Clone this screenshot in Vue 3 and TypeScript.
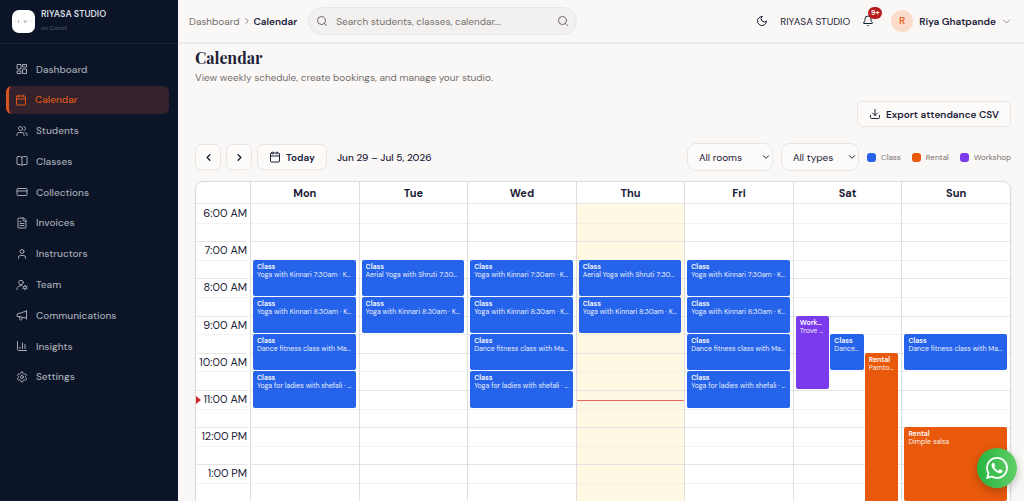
<script setup lang="ts">
import { ref } from 'vue'

interface Shape {
  d?: string
  circles?: [number, number, number][]
}

interface NavItem {
  label: string
  icon: Shape
}

type Kind = 'class' | 'rental' | 'workshop'

interface Booking {
  kind: Kind
  label: string
  detail: string
  start: number
  end: number
  lane?: number
}

interface Day {
  name: string
  today?: boolean
  bookings: Booking[]
}

const calendarIcon: Shape = { d: 'M8 2v4M16 2v4M3 10h18M5 4h14a2 2 0 0 1 2 2v14a2 2 0 0 1-2 2H5a2 2 0 0 1-2-2V6a2 2 0 0 1 2-2z' }

const navItems: NavItem[] = [
  { label: 'Dashboard', icon: { d: 'M3 3h7v9H3zM14 3h7v5h-7zM14 12h7v9h-7zM3 16h7v5H3z' } },
  { label: 'Calendar', icon: calendarIcon },
  { label: 'Students', icon: { d: 'M16 21v-2a4 4 0 0 0-4-4H6a4 4 0 0 0-4 4v2M22 21v-2a4 4 0 0 0-3-3.87M16 3.13a4 4 0 0 1 0 7.75', circles: [[9, 7, 4]] } },
  { label: 'Classes', icon: { d: 'M12 5v16M3 19a1 1 0 0 1-1-1V4a1 1 0 0 1 1-1h6a3 3 0 0 1 3 3 3 3 0 0 1 3-3h6a1 1 0 0 1 1 1v14a1 1 0 0 1-1 1h-6a3 3 0 0 0-3 2 3 3 0 0 0-3-2z' } },
  { label: 'Collections', icon: { d: 'M4 5h16a2 2 0 0 1 2 2v10a2 2 0 0 1-2 2H4a2 2 0 0 1-2-2V7a2 2 0 0 1 2-2zM2 10h20' } },
  { label: 'Invoices', icon: { d: 'M15 2H6a2 2 0 0 0-2 2v16a2 2 0 0 0 2 2h12a2 2 0 0 0 2-2V7zM14 2v4a2 2 0 0 0 2 2h4M10 9H8M16 13H8M16 17H8' } },
  { label: 'Instructors', icon: { d: 'M19 21v-2a4 4 0 0 0-4-4H9a4 4 0 0 0-4 4v2', circles: [[12, 7, 4]] } },
  { label: 'Team', icon: { d: 'M2 21v-1a7 7 0 0 1 9-6.500M18 12.500v1.500M18 20v1.500M13.800 14.800l1.300.7M20.900 18.500l1.300.7M13.800 19.200l1.300-.7M20.900 15.500l1.300-.7', circles: [[10, 7, 4.5], [18, 17, 3]] } },
  { label: 'Communications', icon: { d: 'M3 10l18-6v14L3 15zM7 15v4a2 2 0 0 0 5 1v-3M21 3v17' } },
  { label: 'Insights', icon: { d: 'M3 3v16a2 2 0 0 0 2 2h16M8 17v-3M13 17V6M18 17V9' } },
  { label: 'Settings', icon: { d: 'M12.220 2h-.44a2 2 0 0 0-2 2v.18a2 2 0 0 1-1 1.730l-.43.25a2 2 0 0 1-2 0l-.15-.08a2 2 0 0 0-2.730.73l-.22.38a2 2 0 0 0 .73 2.730l.15.1a2 2 0 0 1 1 1.720v.51a2 2 0 0 1-1 1.740l-.15.09a2 2 0 0 0-.73 2.730l.22.38a2 2 0 0 0 2.730.73l.15-.08a2 2 0 0 1 2 0l.43.25a2 2 0 0 1 1 1.730V20a2 2 0 0 0 2 2h.44a2 2 0 0 0 2-2v-.18a2 2 0 0 1 1-1.730l.43-.25a2 2 0 0 1 2 0l.15.08a2 2 0 0 0 2.730-.73l.22-.39a2 2 0 0 0-.73-2.730l-.15-.08a2 2 0 0 1-1-1.740v-.5a2 2 0 0 1 1-1.740l.15-.09a2 2 0 0 0 .73-2.730l-.22-.38a2 2 0 0 0-2.730-.73l-.15.08a2 2 0 0 1-2 0l-.43-.25a2 2 0 0 1-1-1.730V4a2 2 0 0 0-2-2z', circles: [[12, 12, 3]] } },
]

const activeItem = ref('Calendar')
const query = ref('')
const room = ref('All rooms')
const kindFilter = ref('All types')

const firstHour = 6
const hourCount = 16
const slots = Array.from({ length: hourCount * 2 }, (_, i) => i)
const now = 11.27

const slotLabel = (slot: number) => {
  if (slot % 2) return ''
  const hour = firstHour + slot / 2
  return `${hour > 12 ? hour - 12 : hour}:00 ${hour < 12 ? 'AM' : 'PM'}`
}

const kinnari730: Booking = { kind: 'class', label: 'Class', detail: 'Yoga with Kinnari 7:30am · Kinnari', start: 7.5, end: 8.5 }
const kinnari830: Booking = { kind: 'class', label: 'Class', detail: 'Yoga with Kinnari 8:30am · Kinnari', start: 8.5, end: 9.5 }
const shruti: Booking = { kind: 'class', label: 'Class', detail: 'Aerial Yoga with Shruti 7:30am · Shruti', start: 7.5, end: 8.5 }
const dance: Booking = { kind: 'class', label: 'Class', detail: 'Dance fitness class with Manali', start: 9.5, end: 10.5 }
const ladies: Booking = { kind: 'class', label: 'Class', detail: 'Yoga for ladies with shefali · Shefali', start: 10.5, end: 11.5 }

const days: Day[] = [
  { name: 'Mon', bookings: [kinnari730, kinnari830, dance, ladies] },
  { name: 'Tue', bookings: [shruti, kinnari830] },
  { name: 'Wed', bookings: [kinnari730, kinnari830, dance, ladies] },
  { name: 'Thu', today: true, bookings: [shruti, kinnari830] },
  { name: 'Fri', bookings: [kinnari730, kinnari830, dance, ladies] },
  {
    name: 'Sat',
    bookings: [
      { kind: 'workshop', label: 'Workshop', detail: 'Trove workshop', start: 9, end: 11, lane: 1 },
      { ...dance, lane: 2 },
      { kind: 'rental', label: 'Rental', detail: 'Pamtomime', start: 10, end: 18, lane: 3 },
    ],
  },
  {
    name: 'Sun',
    bookings: [dance, { kind: 'rental', label: 'Rental', detail: 'Dimple salsa', start: 12, end: 14 }],
  },
]

const line = (hour: number) => (hour - firstHour) * 2 + 1

const placement = (b: Booking) => ({
  gridRow: `${line(b.start)} / ${line(b.end)}`,
  gridColumn: b.lane ? `${b.lane + 1}` : '2 / 5',
})

const nowOffset = { top: `${((now - firstHour) / hourCount) * 100}%` }
</script>

<template>
  <div class="app">
    <aside class="sidebar">
      <div class="brand">
        <div class="brand-logo">· ı · v · ·</div>
        <div class="brand-text">
          <strong>RIYASA STUDIO</strong>
          <small>on Contit</small>
        </div>
      </div>
      <nav class="nav">
        <a
          v-for="item in navItems"
          :key="item.label"
          href="#"
          class="nav-item"
          :class="{ active: item.label === activeItem }"
          @click.prevent="activeItem = item.label"
        >
          <svg class="icon nav-icon" viewBox="0 0 24 24">
            <path :d="item.icon.d" />
            <circle v-for="(c, i) in item.icon.circles" :key="i" :cx="c[0]" :cy="c[1]" :r="c[2]" />
          </svg>
          <span>{{ item.label }}</span>
        </a>
      </nav>
    </aside>

    <div class="main">
      <header class="topbar">
        <nav class="crumbs">
          <a href="#">Dashboard</a>
          <svg class="icon crumb-icon" viewBox="0 0 24 24"><path d="M9 18l6-6-6-6" /></svg>
          <span class="crumb-current">Calendar</span>
        </nav>
        <div class="search">
          <svg class="icon" viewBox="0 0 24 24"><circle cx="11" cy="11" r="8" /><path d="M21 21l-4.300-4.300" /></svg>
          <input v-model="query" type="text" aria-label="Search" placeholder="Search students, classes, calendar..." />
          <button type="button" class="plain" aria-label="Run search">
            <svg class="icon" viewBox="0 0 24 24"><circle cx="11" cy="11" r="8" /><path d="M21 21l-4.300-4.300" /></svg>
          </button>
        </div>
        <div class="account">
          <button type="button" class="plain" aria-label="Dark mode">
            <svg class="icon" viewBox="0 0 24 24"><path d="M12 3a6 6 0 0 0 9 9 9 9 0 1 1-9-9z" /></svg>
          </button>
          <span class="studio">RIYASA STUDIO</span>
          <button type="button" class="plain bell" aria-label="Notifications">
            <svg class="icon" viewBox="0 0 24 24"><path d="M10.270 21a2 2 0 0 0 3.460 0M3.260 15.330A1 1 0 0 0 4 17h16a1 1 0 0 0 .74-1.670C19.410 13.960 18 12.500 18 8A6 6 0 0 0 6 8c0 4.500-1.410 5.960-2.740 7.330z" /></svg>
            <span class="badge">9+</span>
          </button>
          <button type="button" class="plain profile">
            <span class="avatar">R</span>
            <span class="profile-name">Riya Ghatpande</span>
            <svg class="icon chevron" viewBox="0 0 24 24"><path d="M4 8l8 8 8-8" /></svg>
          </button>
        </div>
      </header>

      <main class="content">
        <h1>Calendar</h1>
        <p class="subtitle">View weekly schedule, create bookings, and manage your studio.</p>

        <div class="actions">
          <button type="button" class="btn export">
            <svg class="icon" viewBox="0 0 24 24"><path d="M12 3v12M7 10l5 5 5-5M21 15v4a2 2 0 0 1-2 2H5a2 2 0 0 1-2-2v-4" /></svg>
            Export attendance CSV
          </button>
        </div>

        <div class="toolbar">
          <div class="range">
            <button type="button" class="btn step" aria-label="Previous week">
              <svg class="icon" viewBox="0 0 24 24"><path d="M15 18l-6-6 6-6" /></svg>
            </button>
            <button type="button" class="btn step" aria-label="Next week">
              <svg class="icon" viewBox="0 0 24 24"><path d="M9 18l6-6-6-6" /></svg>
            </button>
            <button type="button" class="btn today-btn">
              <svg class="icon" viewBox="0 0 24 24"><path :d="calendarIcon.d" /></svg>
              Today
            </button>
            <span class="range-text">Jun 29 – Jul 5, 2026</span>
          </div>
          <div class="filters">
            <div class="picker rooms">
              <select v-model="room" aria-label="Room"><option>All rooms</option></select>
              <svg class="icon" viewBox="0 0 24 24"><path d="M4 8l8 8 8-8" /></svg>
            </div>
            <div class="picker types">
              <select v-model="kindFilter" aria-label="Type"><option>All types</option></select>
              <svg class="icon" viewBox="0 0 24 24"><path d="M4 8l8 8 8-8" /></svg>
            </div>
            <ul class="legend">
              <li><i class="class"></i>Class</li>
              <li><i class="rental"></i>Rental</li>
              <li><i class="workshop"></i>Workshop</li>
            </ul>
          </div>
        </div>

        <div class="board">
          <table>
            <thead>
              <tr>
                <th class="axis-head"></th>
                <th v-for="day in days" :key="day.name">{{ day.name }}</th>
              </tr>
            </thead>
            <tbody>
              <tr>
                <td>
                  <div class="axis">
                    <div v-for="s in slots" :key="s" class="slot">{{ slotLabel(s) }}</div>
                    <span class="now-arrow" :style="nowOffset"></span>
                  </div>
                </td>
                <td v-for="day in days" :key="day.name" :class="{ today: day.today }">
                  <div class="day">
                    <div v-for="s in slots" :key="s" class="slot" :style="{ gridRow: s + 1 }"></div>
                    <div v-for="b in day.bookings" :key="b.label + b.start" class="booking" :class="b.kind" :style="placement(b)">
                      <b>{{ b.label }}</b>
                      <span>{{ b.detail }}</span>
                    </div>
                    <span v-if="day.today" class="now-line" :style="nowOffset"></span>
                  </div>
                </td>
              </tr>
            </tbody>
          </table>
        </div>
      </main>
    </div>

    <button type="button" class="whatsapp" aria-label="Chat on WhatsApp">
      <svg viewBox="0 0 24 24"><path d="M17.472 14.382c-.297-.149-1.758-.867-2.030-.967-.273-.099-.471-.148-.67.150-.197.297-.767.966-.94 1.164-.173.199-.347.223-.644.075-.297-.15-1.255-.463-2.390-1.475-.883-.788-1.480-1.761-1.653-2.059-.173-.297-.018-.458.130-.606.134-.133.298-.347.446-.520.149-.174.198-.298.298-.497.099-.198.050-.371-.025-.520-.075-.149-.669-1.612-.916-2.207-.242-.579-.487-.500-.669-.510-.173-.008-.371-.010-.570-.010-.198 0-.520.074-.792.372-.272.297-1.040 1.016-1.040 2.479 0 1.462 1.065 2.875 1.213 3.074.149.198 2.096 3.200 5.077 4.487.709.306 1.262.489 1.694.625.712.227 1.360.195 1.871.118.571-.085 1.758-.719 2.006-1.413.248-.694.248-1.289.173-1.413-.074-.124-.272-.198-.570-.347m-5.421 7.403h-.004a9.870 9.870 0 0 1-5.031-1.378l-.361-.214-3.741.982.998-3.648-.235-.374a9.860 9.860 0 0 1-1.510-5.260c.001-5.450 4.436-9.884 9.888-9.884 2.640 0 5.122 1.030 6.988 2.898a9.825 9.825 0 0 1 2.893 6.994c-.003 5.450-4.437 9.884-9.885 9.884m8.413-18.297A11.815 11.815 0 0 0 12.050 0C5.495 0 .16 5.335.157 11.892c0 2.096.547 4.142 1.588 5.945L.057 24l6.305-1.654a11.882 11.882 0 0 0 5.683 1.448h.005c6.554 0 11.890-5.335 11.893-11.893a11.821 11.821 0 0 0-3.480-8.413" /></svg>
    </button>
  </div>
</template>

<style>
body {
  margin: 0;
  background: #faf8f7;
}
</style>

<style scoped>
.app {
  display: flex;
  height: 100vh;
  overflow: hidden;
  font-family: "DM Sans", Inter, "Liberation Sans", sans-serif;
  font-size: 10px;
  color: #1b2136;
}
* {
  box-sizing: border-box;
}
button,
input,
select {
  font: inherit;
  color: inherit;
}
.icon {
  flex: none;
  width: 12px;
  height: 12px;
  fill: none;
  stroke: currentColor;
  stroke-width: 2;
  stroke-linecap: round;
  stroke-linejoin: round;
}
.plain {
  display: flex;
  align-items: center;
  padding: 0;
  border: 0;
  background: none;
}

.sidebar {
  flex: none;
  width: 178px;
  background: #0c1528;
  color: #a4a9b3;
}
.brand {
  display: flex;
  gap: 6px;
  height: 44px;
  padding: 8px 12px 0;
  border-bottom: 1px solid #182338;
}
.brand-logo {
  width: 23px;
  height: 23px;
  margin-top: 2px;
  border-radius: 7px;
  background: #fff;
  color: #777;
  font-size: 6px;
  line-height: 23px;
  text-align: center;
  white-space: nowrap;
  overflow: hidden;
}
.brand-text {
  display: flex;
  flex-direction: column;
}
.brand-text strong {
  font-size: 9px;
  line-height: 12px;
  font-weight: 600;
  color: #d9dce1;
}
.brand-text small {
  margin-top: 3px;
  font-size: 6px;
  line-height: 10px;
  color: #5b5e67;
}
.nav {
  display: flex;
  flex-direction: column;
  justify-content: space-between;
  height: 336px;
  margin-top: 11px;
  padding: 0 9px 0 6px;
}
.nav-item {
  display: flex;
  align-items: center;
  gap: 8px;
  height: 28px;
  padding-left: 10px;
  border-radius: 6px;
  color: inherit;
  font-weight: 500;
  text-decoration: none;
}
.nav-item.active {
  padding-left: 6px;
  border-left: 3px solid #d9541a;
  background: #33222b;
  color: #de5719;
}

.main {
  flex: 1;
  display: flex;
  flex-direction: column;
  min-width: 0;
  background: #faf8f7;
}
.topbar {
  flex: none;
  display: flex;
  align-items: center;
  height: 44px;
  padding: 0 13px 0 11px;
  border-bottom: 2px solid #eceae8;
}
.crumbs {
  display: flex;
  align-items: center;
  gap: 2px;
}
.crumbs a {
  color: #77706d;
  text-decoration: none;
}
.crumb-icon {
  width: 10px;
  height: 10px;
  color: #77706d;
}
.crumb-current {
  font-weight: 600;
}
.search {
  display: flex;
  align-items: center;
  gap: 8px;
  width: 269px;
  height: 28px;
  margin-left: 11px;
  padding: 0 7px;
  border: 1px solid #e9e7e5;
  border-radius: 14px;
  background: #f3f1f0;
  color: #6b6665;
}
.search input {
  flex: 1;
  min-width: 0;
  padding: 0;
  border: 0;
  outline: 0;
  background: none;
}
.search input::placeholder {
  color: #77706d;
  opacity: 1;
}
.account {
  display: flex;
  align-items: center;
  gap: 12px;
  margin-left: auto;
}
.bell {
  position: relative;
}
.badge {
  position: absolute;
  left: 6px;
  top: -8px;
  width: 14px;
  height: 12px;
  border-radius: 6px;
  background: #b91c1c;
  color: #fff;
  font-size: 7px;
  font-weight: 600;
  line-height: 12px;
  text-align: center;
}
.profile {
  gap: 6px;
  margin-left: 5px;
}
.avatar {
  width: 22px;
  height: 22px;
  border-radius: 50%;
  background: #fbdccb;
  color: #e8692c;
  font-weight: 600;
  line-height: 22px;
  text-align: center;
}
.profile-name {
  font-weight: 600;
}
.chevron {
  width: 9px;
  height: 9px;
  color: #77706d;
}

.content {
  flex: 1;
  min-height: 0;
  overflow-y: auto;
  scrollbar-width: none;
  padding: 3px 13px 0 17px;
}
h1 {
  margin: 0;
  font-family: "Playfair Display", "Liberation Serif", serif;
  font-size: 16px;
  line-height: 22px;
  font-weight: 700;
}
.subtitle {
  margin: 2px 0 0;
  line-height: 14px;
  color: #77706d;
}
.actions {
  display: flex;
  justify-content: flex-end;
  margin-top: 16px;
}
.btn {
  display: flex;
  align-items: center;
  justify-content: center;
  gap: 5px;
  height: 26px;
  padding: 0 11px;
  border: 1px solid #e8e5e2;
  border-radius: 6px;
  background: #fcfbfa;
  font-weight: 600;
  white-space: nowrap;
}
.toolbar {
  display: flex;
  align-items: center;
  justify-content: space-between;
  height: 28px;
  margin-top: 16px;
}
.range,
.filters {
  display: flex;
  align-items: center;
}
.range {
  gap: 5px;
}
.step {
  width: 26px;
  padding: 0;
}
.step .icon {
  width: 11px;
  height: 11px;
  stroke-width: 3;
}
.range-text {
  margin-left: 5px;
  font-weight: 500;
}
.filters {
  gap: 8px;
}
.picker {
  position: relative;
}
.picker select {
  width: 100%;
  height: 28px;
  padding: 0 11px;
  border: 1px solid #e8e5e2;
  border-radius: 9px;
  background: #fcfbfa;
  appearance: none;
}
.rooms {
  width: 86px;
}
.types {
  width: 78px;
}
.picker .icon {
  position: absolute;
  right: 3px;
  top: 10px;
  width: 8px;
  height: 8px;
  stroke-width: 3;
  pointer-events: none;
}
.legend {
  display: flex;
  gap: 11px;
  margin: 0;
  padding: 0;
  list-style: none;
  font-size: 8px;
  color: #77706d;
}
.legend li {
  display: flex;
  align-items: center;
  gap: 5px;
}
.legend i {
  width: 9px;
  height: 9px;
  border-radius: 3px;
}
.class {
  background: #2563eb;
}
.rental {
  background: #e8590c;
}
.workshop {
  background: #7c3aed;
}

.board {
  margin-top: 10px;
  border: 1px solid #dddbda;
  border-radius: 8px;
  background: #fff;
  overflow: hidden;
  box-shadow: 0 1px 2px #0000001a;
}
table {
  width: 100%;
  table-layout: fixed;
  border-collapse: separate;
  border-spacing: 0;
}
th {
  height: 22px;
  padding: 0;
  border-left: 1px solid #dedede;
  border-bottom: 1px solid #e8e8e8;
  font-size: 11px;
  line-height: 14px;
  font-weight: 700;
}
.axis-head {
  width: 54px;
  border-left: 0;
}
td {
  padding: 0;
  border-left: 1px solid #dedede;
}
td:first-child {
  border-left: 0;
}
.today {
  background: #fff9e3;
}
.axis,
.day {
  position: relative;
  display: grid;
  height: 595px;
  grid-template-rows: repeat(32, minmax(0, 1fr));
}
.day {
  grid-template-columns: 2px repeat(3, minmax(0, 1fr)) 2px;
}
.slot {
  grid-column: 1 / -1;
  border-top: 1px solid #e4e4e4;
}
.slot:nth-child(even) {
  border-top: 1px dotted #e8e8e8;
}
.slot:first-child {
  border-top-color: transparent;
}
.axis .slot {
  margin: 0 3px 0 1px;
  font-size: 11px;
  line-height: 16px;
  text-align: right;
  white-space: nowrap;
}
.booking {
  z-index: 1;
  min-width: 0;
  margin: 0 1px 1px 0;
  padding: 3px 4px;
  border-radius: 2px;
  color: #fff;
  overflow: hidden;
}
.booking b,
.booking span {
  display: block;
  overflow: hidden;
  text-overflow: ellipsis;
  white-space: nowrap;
  font-size: 7px;
  line-height: 8px;
}
.booking b {
  font-weight: 600;
}
.booking span {
  opacity: 0.9;
}
.now-line {
  position: absolute;
  left: 0;
  right: 0;
  border-top: 1px solid #e5665c;
}
.now-arrow {
  position: absolute;
  left: 0;
  margin-top: -4px;
  border: 4px solid transparent;
  border-left: 5px solid #dc2626;
  border-right: 0;
}

.whatsapp {
  position: fixed;
  right: 7px;
  bottom: 13px;
  z-index: 2;
  display: flex;
  align-items: center;
  justify-content: center;
  width: 40px;
  height: 40px;
  padding: 0;
  border: 0;
  border-radius: 50%;
  background: linear-gradient(90deg, #27b43f, #60cf68);
  box-shadow: 0 3px 8px #00000040;
}
.whatsapp svg {
  width: 22px;
  height: 22px;
  fill: #fff;
}
</style>
